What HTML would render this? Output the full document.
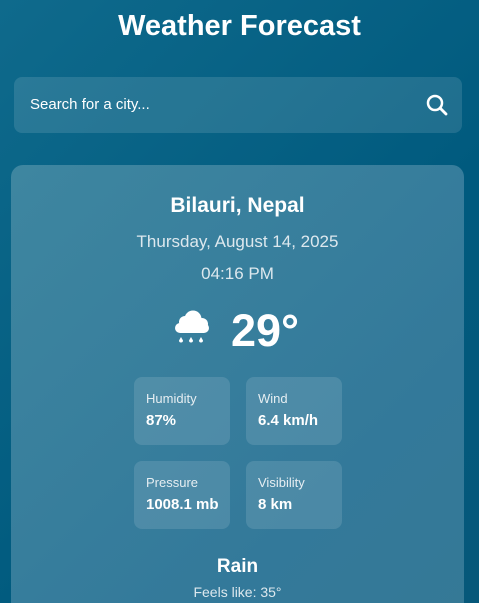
<!DOCTYPE html>
<html><head><style>
*{margin:0;padding:0;box-sizing:border-box}
html,body{width:479px;height:603px;overflow:hidden}
body{background:linear-gradient(135deg,#0f6a8c,#005a7e 60%,#06587a);font-family:"Liberation Sans",sans-serif;color:#fff;position:relative}
h1{position:absolute;top:10px;left:0;width:479px;text-align:center;font-size:29px;font-weight:bold}
.search{position:absolute;left:14px;top:77px;width:448px;height:56px;border-radius:8px;background:rgba(255,255,255,0.12);}
.search span{position:absolute;left:16px;top:19px;font-size:15px}
.search svg{position:absolute;right:14px;top:17px}
.card{position:absolute;left:11px;top:165px;width:453px;height:460px;border-radius:12px;background:linear-gradient(135deg,#3e86a0,#33799a 70%,#357996)}
.c{position:absolute;left:0;width:453px;text-align:center}
.box{position:absolute;width:96px;height:68px;border-radius:8px;background:rgba(255,255,255,0.12)}
.box .l{position:absolute;left:12px;top:14px;font-size:13px;color:#e6eef2}
.box .v{position:absolute;left:12px;top:35px;font-size:15px;font-weight:bold}
</style></head><body>
<h1>Weather Forecast</h1>
<div class="search"><span>Search for a city...</span>
<svg width="22" height="22" viewBox="0 0 22 22"><circle cx="9" cy="9" r="7" fill="none" stroke="#fff" stroke-width="2.5"/><path d="M14 14l6 6" stroke="#fff" stroke-width="2.8" stroke-linecap="round"/></svg></div>
<div class="card">
<div class="c" style="top:29px;font-size:21px;font-weight:bold">Bilauri, Nepal</div>
<div class="c" style="top:67px;font-size:17px;color:#dde8ee">Thursday, August 14, 2025</div>
<div class="c" style="top:99px;font-size:17px;color:#dde8ee">04:16 PM</div>
<svg style="position:absolute;left:162px;top:144px" width="38" height="40" viewBox="0 0 38 40"><circle cx="12" cy="13" r="6" fill="#fff"/><circle cx="20" cy="10" r="8.5" fill="#fff"/><circle cx="29" cy="15" r="6" fill="#fff"/><rect x="2" y="14" width="34" height="10" rx="5" fill="#fff"/><path d="M8 28l-2 3.5a2 2 0 0 0 4 0z M18 28l-2 3.5a2 2 0 0 0 4 0z M28 28l-2 3.5a2 2 0 0 0 4 0z" fill="#fff"/></svg>
<div style="position:absolute;left:220px;top:140px;font-size:45px;font-weight:bold">29°</div>
<div class="box" style="left:123px;top:212px"><div class="l">Humidity</div><div class="v">87%</div></div>
<div class="box" style="left:235px;top:212px"><div class="l">Wind</div><div class="v">6.4 km/h</div></div>
<div class="box" style="left:123px;top:296px"><div class="l">Pressure</div><div class="v">1008.1 mb</div></div>
<div class="box" style="left:235px;top:296px"><div class="l">Visibility</div><div class="v">8 km</div></div>
<div class="c" style="top:391px;font-size:19px;font-weight:bold">Rain</div>
<div class="c" style="top:419px;font-size:14px;color:#dde8ee">Feels like: 35°</div>
</div>
</body></html>
